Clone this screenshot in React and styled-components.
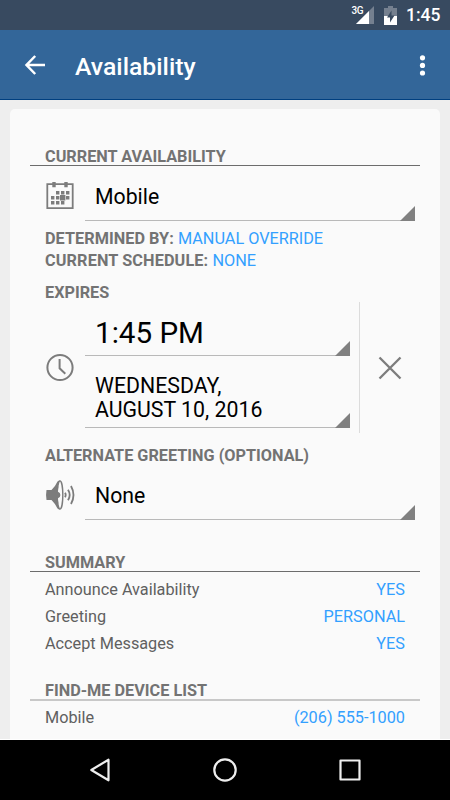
import React from 'react'
import styled, { createGlobalStyle } from 'styled-components'

const GlobalStyle = createGlobalStyle`
  * {
    box-sizing: border-box;
  }

  body {
    margin: 0;
    font-family: Roboto, sans-serif;
    overflow: hidden;
  }
`

const Screen = styled.div`
  width: 450px;
  height: 800px;
  display: flex;
  flex-direction: column;
  overflow: hidden;
  background-color: #eeeeee;
`

const StatusBar = styled.div`
  height: 30px;
  flex: none;
  display: flex;
  align-items: center;
  justify-content: flex-end;
  padding-right: 10px;
  background-color: #384a60;
`

const Network = styled.span`
  align-self: flex-start;
  margin-top: 5px;
  color: white;
  font-size: 10px;
  font-weight: 500;
  letter-spacing: -0.5px;
  line-height: 11px;
`

const Clock = styled.span`
  width: 34px;
  margin-left: 9px;
  color: white;
  font-size: 17.5px;
  font-weight: 500;
  line-height: 31px;
  text-align: right;
`

const AppBar = styled.header`
  height: 70px;
  flex: none;
  display: flex;
  align-items: center;
  padding: 0 16px 0 22px;
  color: white;
  background-color: #336699;
  border-bottom: 1px solid #003f80;
`

const Title = styled.h1`
  flex: 1;
  margin: 4px 0 0 27px;
  font-size: 24.8px;
  font-weight: 500;
  line-height: 30px;
`

const Content = styled.main`
  flex: 1;
  min-height: 0;
  padding: 9px 10px 0;
  border-bottom: 1px solid #ffffff;
`

const Card = styled.section`
  height: 100%;
  padding: 37px 20px 0;
  background-color: #fafafa;
  border-radius: 5px 5px 0 0;
`

const Heading = styled.h2`
  height: ${props => (props.$light ? 21 : 20)}px;
  margin: ${props => props.$top || 0}px 0 0;
  padding-left: 15px;
  color: #737373;
  font-size: 16.25px;
  font-weight: 700;
  line-height: 21px;
  border-bottom: ${props => (props.$light ? '2px solid #c8c8c8' : '1px solid #6c6c6c')};
`

const Label = styled.h3`
  height: 22px;
  margin: ${props => props.$top || 0}px 0 0;
  padding-left: 15px;
  color: #737373;
  font-size: 16.25px;
  font-weight: 700;
  letter-spacing: ${props => props.$spacing || 0}px;
  line-height: 23px;
`

const Value = styled.span`
  color: #33a0ff;
  font-weight: 400;
  letter-spacing: 0;
`

const Field = styled.div`
  display: grid;
  grid-template-columns: 30px 330px;
  column-gap: 10px;
  padding-left: 15px;
  align-items: start;
`

const FieldIcon = styled.div`
  height: 30px;
  margin-top: ${props => props.$top}px;
`

const Spinner = styled.div`
  position: relative;
  height: ${props => props.$height}px;
  padding: ${props => props.$top}px 0 0 10px;
  color: #000000;
  font-size: ${props => props.$size || 21.25}px;
  line-height: ${props => props.$leading || 31}px;
  border-bottom: 1px solid #b9b9b9;

  &::after {
    content: '';
    position: absolute;
    right: 0;
    bottom: -1px;
    width: 15px;
    height: 15px;
    background-color: #808080;
    clip-path: polygon(100% 0, 100% 100%, 0 100%);
  }
`

const Expiry = styled.div`
  display: grid;
  grid-template-columns: 30px 275px 9px 61px;
  height: 131px;
  margin-top: -1px;
  padding-left: 15px;
`

const ExpirySpinners = styled.div`
  margin-left: 10px;
`

const ClearButton = styled.button`
  grid-column: 4;
  display: flex;
  align-items: center;
  justify-content: center;
  padding: 0;
  background: none;
  border: 0;
  border-left: 1px solid #dcdcdc;
`

const Rows = styled.div`
  padding-top: ${props => props.$top}px;
`

const Row = styled.div`
  display: flex;
  justify-content: space-between;
  height: 27px;
  padding: 0 15px;
  color: #606060;
  font-size: 16.25px;
  line-height: 27px;
`

const NavBar = styled.nav`
  height: 60px;
  flex: none;
  display: grid;
  grid-template-columns: repeat(3, 125px);
  justify-content: center;
  align-items: center;
  justify-items: center;
  background-color: #000000;
`

const Icon = styled.svg`
  display: block;
  flex: none;
`

const Signal = styled(Icon)`
  margin-left: -7px;
`

const Battery = styled(Icon)`
  margin-left: 10px;
`

const SignalIcon = () => (
  <Signal width="18" height="18" viewBox="0 0 18 18">
    <path d="M18 0V18H0Z" fill="#75808f" />
    <path d="M13 5V18H0Z" fill="#fff" />
  </Signal>
)

const BatteryIcon = () => (
  <Battery width="13" height="19" viewBox="0 0 13 19">
    <path d="M4 0h5v2h4v8H0V2h4Z" fill="#75808f" />
    <path d="M0 10h13v9H0Z" fill="#fff" />
    <path d="M7.5 4.5 3 11.5h3v5l4.5-7H7.5Z" fill="#384a60" />
  </Battery>
)

const BackIcon = () => (
  <Icon width="26" height="26" viewBox="0 0 26 26">
    <path d="M23 13H5M13.2 4 4.5 13l8.7 9" fill="none" stroke="#fff" strokeWidth="2.5" />
  </Icon>
)

const MoreIcon = () => (
  <Icon width="22" height="26" viewBox="0 0 22 26">
    <circle cx="10.5" cy="5.8" r="2.6" fill="#fff" />
    <circle cx="10.5" cy="13.4" r="2.6" fill="#fff" />
    <circle cx="10.5" cy="21" r="2.6" fill="#fff" />
  </Icon>
)

const CalendarIcon = () => (
  <Icon width="30" height="30" viewBox="0 0 30 30" fill="#7c7c7c">
    <path d="M2.3 4.2h25.4v24H2.3Z" fill="none" stroke="#7c7c7c" strokeWidth="1.8" />
    <path d="M7.3 2h3.4v5.3H7.3zM19.3 2h3.4v5.3h-3.4z" />
    <path d="M11 11h3.4v3.4H11zM16 11h3.4v3.4H16zM21 11h3.4v3.4H21zM6 16h3.4v3.4H6zM11 16h3.4v3.4H11zM15 15h5.4v5.4H15zM21 16h3.4v3.4H21zM6 21h3.4v3.4H6zM11 21h3.4v3.4H11zM16 21h3.4v3.4H16z" />
  </Icon>
)

const ClockIcon = () => (
  <Icon width="30" height="30" viewBox="0 0 30 30" fill="none" stroke="#7c7c7c" strokeWidth="2">
    <circle cx="15" cy="15.5" r="12.6" />
    <path d="M14.6 7v9.3l5.7 5.4" />
  </Icon>
)

const SpeakerIcon = () => (
  <Icon width="30" height="30" viewBox="0 0 30 30">
    <path d="M1.5 10H6.5Q10.5 6 12.5 1.5L14.5 .3V29.7L12.5 28.5Q10.5 24 6.5 20H1.5Q.6 15 1.5 10Z" fill="#7c7c7c" />
    <ellipse cx="15" cy="15" rx="2.8" ry="14.1" fill="#fafafa" stroke="#7c7c7c" strokeWidth="1.4" />
    <path d="M11 6.5H13.3Q12.9 9.5 13 11.8 15.4 12.6 15.4 15T13 18.2Q12.9 20.5 13.3 23.5H11Z" fill="#7c7c7c" />
    <path d="M20 12.8q1.4 2.2 0 4.4M23 9.8q3.4 5.200 0 10.4M26 6q5 9 0 18" fill="none" stroke="#7c7c7c" strokeWidth="1.8" />
  </Icon>
)

const CloseIcon = () => (
  <Icon width="24" height="24" viewBox="0 0 24 24">
    <path d="m1.5 1.5 21 21M22.5 1.5l-21 21" stroke="#7c7c7c" strokeWidth="2.3" />
  </Icon>
)

const NavIcon = ({ children }) => (
  <Icon width="30" height="30" viewBox="0 0 30 30" fill="none" stroke="#eee" strokeWidth="2.2" strokeLinejoin="round">
    {children}
  </Icon>
)

const summary = [
  ['Announce Availability', 'YES'],
  ['Greeting', 'PERSONAL'],
  ['Accept Messages', 'YES'],
]

export default function App() {
  return (
    <Screen>
      <GlobalStyle />
      <StatusBar>
        <Network>3G</Network>
        <SignalIcon />
        <BatteryIcon />
        <Clock>1:45</Clock>
      </StatusBar>
      <AppBar>
        <BackIcon />
        <Title>Availability</Title>
        <MoreIcon />
      </AppBar>
      <Content>
        <Card>
          <Heading>CURRENT AVAILABILITY</Heading>
          <Field>
            <FieldIcon $top={14}><CalendarIcon /></FieldIcon>
            <Spinner $height={55} $top={15}>Mobile</Spinner>
          </Field>
          <Label $top={6} $spacing={0.04}>DETERMINED BY: <Value>MANUAL OVERRIDE</Value></Label>
          <Label $spacing={0.12}>CURRENT SCHEDULE: <Value>NONE</Value></Label>
          <Label $top={10}>EXPIRES</Label>
          <Expiry>
            <FieldIcon $top={50}><ClockIcon /></FieldIcon>
            <ExpirySpinners>
              <Spinner $height={54} $top={13} $size={29.6} $leading={36}>1:45 PM</Spinner>
              <Spinner $height={72} $top={18} $size={21.3} $leading={24}>WEDNESDAY,<br />AUGUST 10, 2016</Spinner>
            </ExpirySpinners>
            <ClearButton aria-label="Clear"><CloseIcon /></ClearButton>
          </Expiry>
          <Label $top={11}>ALTERNATE GREETING (OPTIONAL)</Label>
          <Field>
            <FieldIcon $top={14}><SpeakerIcon /></FieldIcon>
            <Spinner $height={54} $top={14}>None</Spinner>
          </Field>
          <Heading $top={32}>SUMMARY</Heading>
          <Rows $top={4}>
            {summary.map(([name, value]) => (
              <Row key={name}><span>{name}</span><Value>{value}</Value></Row>
            ))}
          </Rows>
          <Heading $top={23} $light>FIND-ME DEVICE LIST</Heading>
          <Rows $top={3}>
            <Row><span>Mobile</span><Value>(206) 555-1000</Value></Row>
          </Rows>
        </Card>
      </Content>
      <NavBar>
        <NavIcon><path d="M6.3 15 23.5 4.7V25.3Z" /></NavIcon>
        <NavIcon><circle cx="15" cy="15" r="10.7" /></NavIcon>
        <NavIcon><path d="M5.5 5.5h19v19h-19z" /></NavIcon>
      </NavBar>
    </Screen>
  )
}
